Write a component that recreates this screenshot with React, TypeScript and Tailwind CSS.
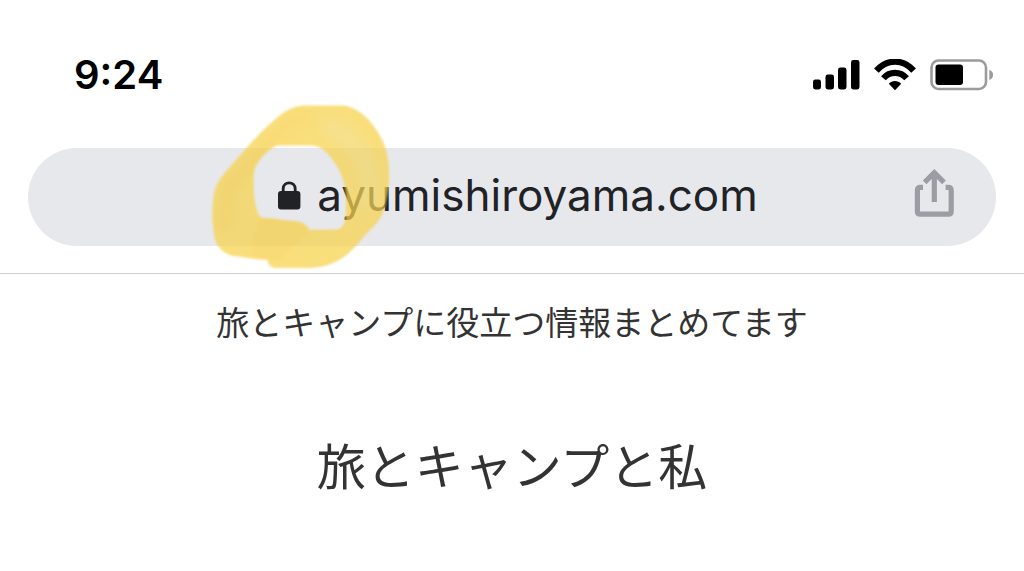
import React from "react";

function SignalIcon() {
  return (
    <svg className="h-8 w-12" viewBox="0 0 48 32" aria-hidden="true">
      <rect x="1" y="20.5" width="8" height="10" rx="2.4" />
      <rect x="13.5" y="15.5" width="8.5" height="15" rx="2.4" />
      <rect x="26" y="8.5" width="8.5" height="22" rx="2.4" />
      <rect x="39" y="1" width="8.5" height="29.5" rx="2.4" />
    </svg>
  );
}

function WifiIcon() {
  return (
    <svg className="h-8 w-11" viewBox="0 0 44 32" aria-hidden="true">
      <g fill="none" stroke="#000" strokeWidth="6.2">
        <path d="M3.4 11.6C14-.4 30-.4 40.6 11.6" />
        <path d="M10.4 19.2C16.6 12 27.4 12 33.6 19.2" />
      </g>
      <path d="M22 31.2L15.8 24.8C19 21 25 21 28.2 24.8Z" />
    </svg>
  );
}

function BatteryIcon() {
  return (
    <svg className="h-8 w-16" viewBox="0 0 64 32" aria-hidden="true">
      <rect x="1.5" y="1.5" width="54.5" height="28.5" rx="7" fill="#fff" stroke="#9b9b9b" strokeWidth="2.6" />
      <rect x="5.5" y="5.5" width="27.5" height="20.5" rx="3" />
      <path d="M59.3 10.8C64.3 12.6 64.3 19.2 59.3 21Z" fill="#9b9b9b" />
    </svg>
  );
}

function LockIcon() {
  return (
    <svg className="h-8 w-6" viewBox="0 0 24 32" aria-hidden="true">
      <rect x="1" y="12" width="22.4" height="18.5" rx="3" fill="#202226" />
      <path d="M6.2 13V9.8C6.2 1.8 18.2 1.8 18.2 9.8V13" fill="none" stroke="#202226" strokeWidth="2.8" />
    </svg>
  );
}

function ShareIcon() {
  return (
    <svg className="h-12 w-10" viewBox="0 0 40 48" fill="none" stroke="#9a9ea4" strokeWidth="5.2" aria-hidden="true">
      <path d="M9 18.4H6.4Q3.4 18.4 3.4 21.4V42.2Q3.4 45.2 6.4 45.2H34.2Q37.2 45.2 37.2 42.2V21.4Q37.2 18.4 34.2 18.4H31.6" />
      <path d="M20.3 33V4.5M10.6 13.4L20.3 3.7L30 13.4" />
    </svg>
  );
}

function MarkerCircle() {
  return (
    <svg
      className="pointer-events-none absolute -left-[72px] -top-[69px] h-[178px] w-[190px]"
      viewBox="205 98 190 178"
      aria-hidden="true"
    >
      <defs>
        <filter id="soft" x="-5%" y="-5%" width="110%" height="110%">
          <feGaussianBlur stdDeviation="1.2" />
        </filter>
        <filter id="wash" x="-50%" y="-50%" width="200%" height="200%">
          <feGaussianBlur stdDeviation="6" />
        </filter>
        <mask id="ring">
          <path
            filter="url(#soft)"
            fill="#fff"
            fillRule="evenodd"
            d="M304 105.5H342C360 106 377 126 384 144C390 160 391 180 386 202C384 215 378 223 369 231C361 239 354 250 344 257C331 266 318 268 305 268H274C270 266 267 264 268 260C256 260 244 257 233 256C222 253 216 246 214 235C211 216 212 194 217 184C222 175 229 168 235 161C247 148 258 134 272 122C284 111 293 106 304 105.5Z M277 145.5C269 149 255 162 254 173C253 184 254 204 258 213C260 218 264 218 269 218L298 221.5C304 223 308 225 309 229.5H336C344 229 346 222 346 207C347 192 344 175 334 162C327 151 320 145.5 310 145.5Z"
          />
        </mask>
      </defs>
      <g mask="url(#ring)" opacity="0.72">
        <rect x="205" y="98" width="190" height="178" fill="#f7d24a" />
        <g fill="none" filter="url(#wash)">
          <path d="M224 230L228 188L286 124L310 114" stroke="#f6cb3c" strokeWidth="8" />
          <path d="M324 128Q348 128 366 165Q372 190 366 208" stroke="#f3d662" strokeWidth="20" />
        </g>
        <path filter="url(#soft)" d="M268 260L281 260L309 231L298 221L260 218L249 256Z" fill="#f5cb3a" fillOpacity=".6" />
      </g>
    </svg>
  );
}

export default function App() {
  return (
    <div className="min-h-screen bg-white font-[Inter,'Noto_Sans_CJK_JP',sans-serif] text-black">
      <header className="border-b border-[#cfcfd1] px-7 pb-[27px] pt-[51px]">
        <div className="flex h-12 items-center justify-between pl-[46px] pr-0.5">
          <time className="text-[40px] font-semibold leading-[48px]">9:24</time>
          <div className="flex items-center gap-[13px]">
            <SignalIcon />
            <WifiIcon />
            <BatteryIcon />
          </div>
        </div>
        <div className="mt-[49px] grid h-[98px] grid-cols-[1fr_auto_1fr] items-center rounded-full bg-[#e7e8ec] pl-[53px] pr-[42px]">
          <button
            type="button"
            className="relative col-start-2 flex items-center gap-4 pb-1 text-[44px] leading-[56px] text-[#202226]"
          >
            <LockIcon />
            <span>ayumishiroyama.com</span>
            <MarkerCircle />
          </button>
          <button type="button" aria-label="共有" className="justify-self-end pb-2">
            <ShareIcon />
          </button>
        </div>
      </header>
      <main className="px-7 text-center font-['Noto_Sans_CJK_JP',sans-serif] text-[#333]">
        <p className="pt-[23px] text-[33px] leading-[48px]">旅とキャンプに役立つ情報まとめてます</p>
        <h1 className="mt-[83px] text-[49px] leading-[72px]">旅とキャンプと私</h1>
      </main>
    </div>
  );
}
